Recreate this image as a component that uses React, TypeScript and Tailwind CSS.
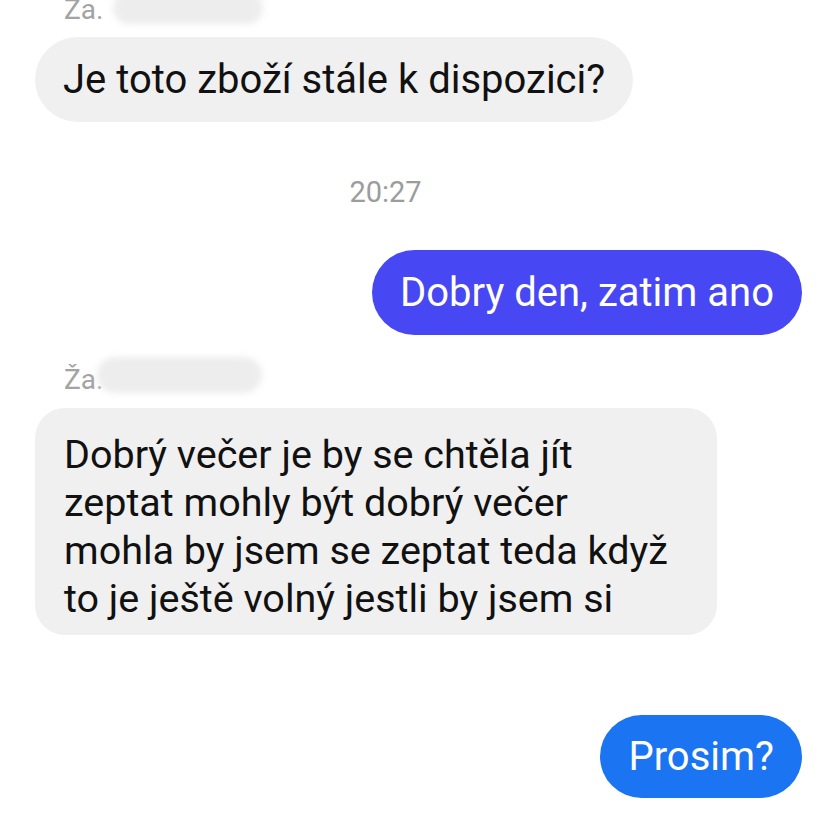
import React from "react";

const font = { fontFamily: "Roboto, 'Noto Sans', sans-serif" };

export default function App() {
  const lines = [
    "Dobrý večer je by se chtěla jít",
    "zeptat mohly být dobrý večer",
    "mohla by jsem se zeptat teda když",
    "to je ještě volný jestli by jsem si",
  ];

  return (
    <div className="w-[828px] h-[828px] bg-white overflow-hidden flex flex-col pl-[35px] pr-[26px]" style={font}>
      {/* first name, hidden behind a blurred blob */}
      <div className="relative h-[37px] shrink-0">
        <span className="absolute left-[29px] top-[-4px] text-[28px] leading-[28px] text-[#a3a3a3]">Ža.</span>
        <div className="absolute left-[78px] top-[-8px] w-[150px] h-[32px] rounded-full bg-[#ededed] blur-[3px]" />
      </div>

      <div className="self-start h-[85px] rounded-full bg-[#f0f0f0] px-[28px] flex items-center text-[40px] text-[#111]">
        Je toto zboží stále k dispozici?
      </div>

      <div className="h-[128px] flex items-center justify-center shrink-0 pt-[14px]">
        <span className="text-[29px] text-[#9c9c9c] -ml-[66px]">20:27</span>
      </div>

      <div className="self-end h-[85px] rounded-full bg-[#4747f4] px-[28px] flex items-center text-[40px] text-white">
        Dobry den, zatim ano
      </div>

      {/* second name */}
      <div className="relative h-[73px] shrink-0">
        <span className="absolute left-[29px] top-[31px] text-[28px] leading-[28px] text-[#a3a3a3]">Ža.</span>
        <div className="absolute left-[62px] top-[22px] w-[165px] h-[36px] rounded-full bg-[#ededed] blur-[3px]" />
      </div>

      <div className="self-start w-[682px] h-[227px] rounded-[30px] bg-[#f0f0f0] pl-[29px] pt-[23px] text-[39.5px] leading-[48px] text-[#111]">
        {lines.map((l) => (
          <div key={l} className="whitespace-nowrap">
            {l}
          </div>
        ))}
      </div>

      <div className="h-[80px] shrink-0" />

      <div className="self-end h-[83px] rounded-full bg-[#1b74f1] px-[28px] flex items-center text-[40px] text-white">
        Prosim?
      </div>
    </div>
  );
}
